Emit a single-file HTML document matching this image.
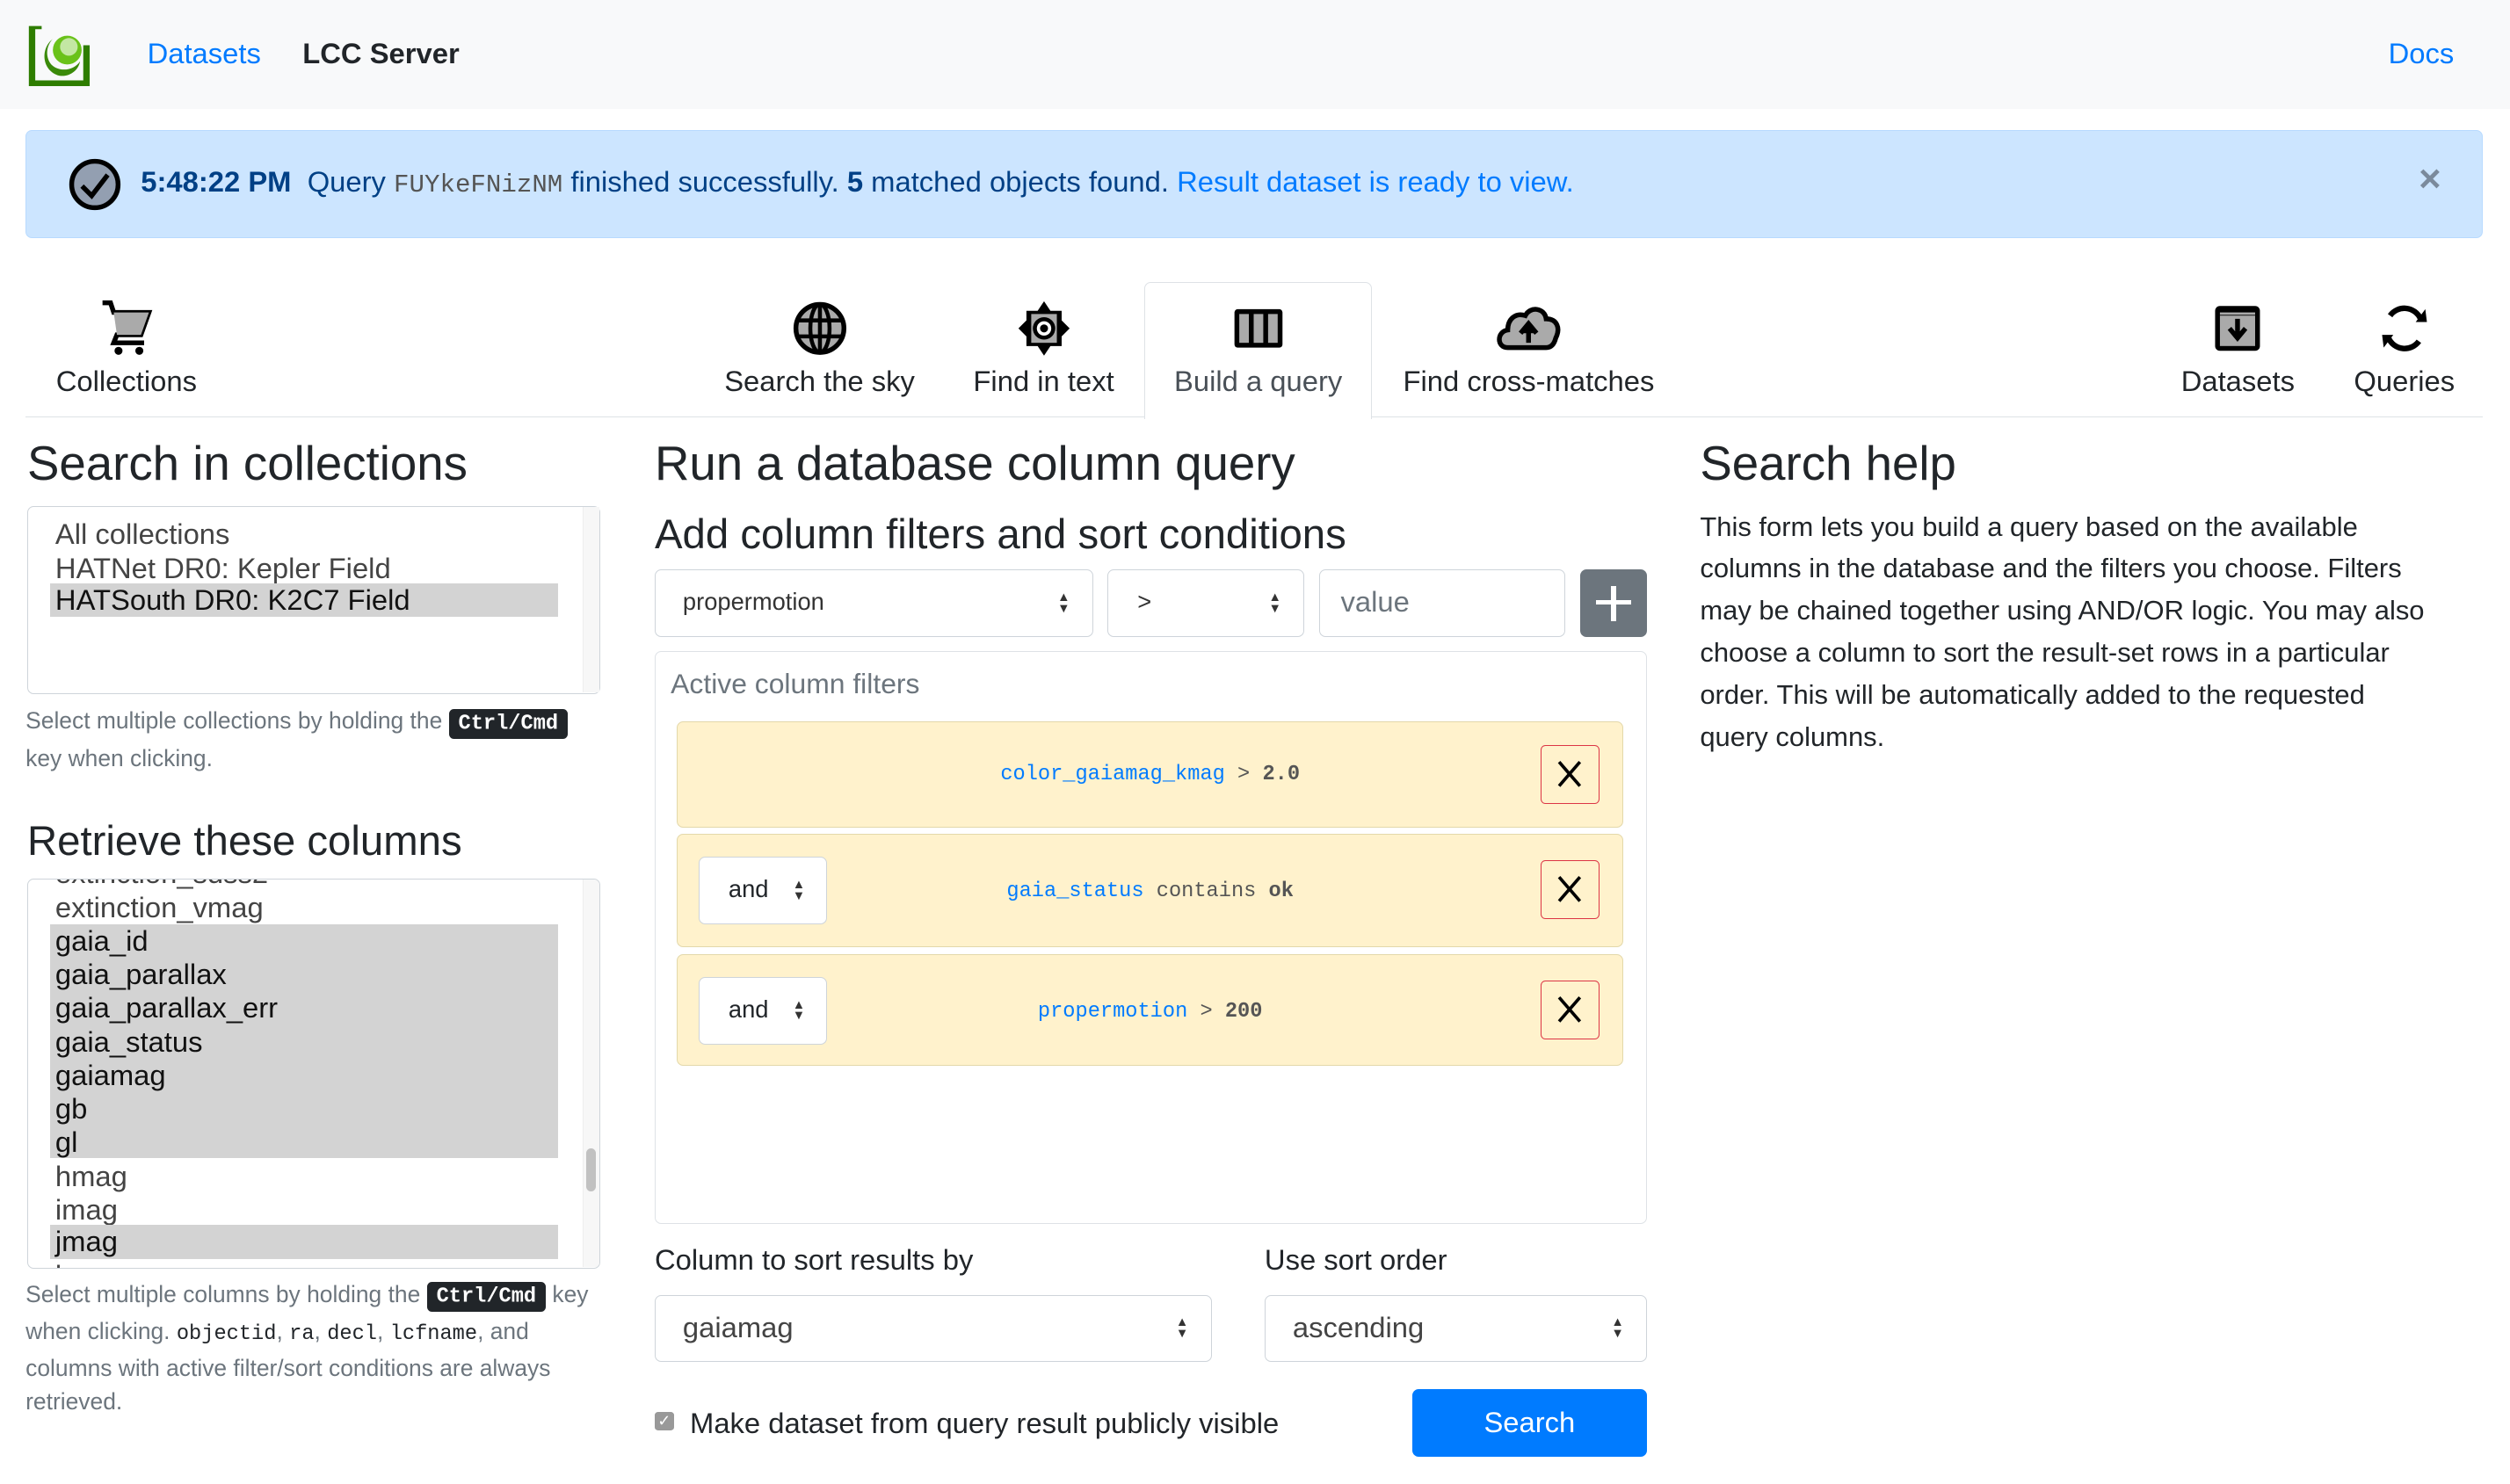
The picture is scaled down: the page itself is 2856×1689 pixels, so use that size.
<!DOCTYPE html>
<html><head><meta charset="utf-8">
<style>
html,body{margin:0;padding:0;background:#fff;width:2856px;height:1689px;overflow:hidden}
#w{zoom:1.82143;width:1568px;height:928px;position:relative;font-family:"Liberation Sans",Arial,sans-serif;color:#212529}
.a{position:absolute}
.mono{font-family:"Liberation Mono",monospace}
.blue{color:#007bff}
.tab{position:absolute;top:176px;height:85px;text-align:center;font-size:18px;color:#212529}
.tab svg{display:block;margin:11px auto 0}
.tab span{position:absolute;left:0;right:0;top:52px;white-space:nowrap}
h2{position:absolute;margin:0;font-weight:500;font-size:30px;line-height:36px;color:#212529}
.sel{position:absolute;border:1px solid #ced4da;border-radius:4px;background:#fff;box-sizing:border-box}
.opt{position:absolute;left:14px;right:26px;height:21px;font-size:18px;line-height:21px;padding-left:3px;color:#444}
.opt.s{background:#d3d3d3;color:#111}
.help{position:absolute;font-size:14.5px;line-height:21px;color:#6c757d}
kbd{background:#212529;color:#fff;border-radius:3px;padding:2px 6px;font-family:"Liberation Mono",monospace;font-size:13px;font-weight:bold}
code{font-family:"Liberation Mono",monospace;font-size:13px;color:#212529}
.arr{position:absolute;right:14px;top:50%;margin-top:-7px;font-size:8px;line-height:7px;color:#333}
.flt{position:absolute;left:423px;width:591px;background:#fff2cc;border:1px solid #e3d8aa;border-radius:4px;box-sizing:border-box}
.x{position:absolute;right:14px;width:37px;height:37px;border:1px solid #dc3545;border-radius:3px;box-sizing:border-box}
.and{position:absolute;left:13px;width:80px;height:42px;background:#fff;border:1px solid #ced4da;border-radius:4px;box-sizing:border-box;font-size:15px;line-height:40px;padding-left:18px}
.ft{position:absolute;left:0;right:0;text-align:center;font-family:"Liberation Mono",monospace;font-size:13px;color:#555}
</style></head><body><div id="w">
<div class="a" style="left:0;top:0;width:1568px;height:68px;background:#f8f9fa"></div>
<svg class="a" style="left:17px;top:14px" width="41" height="40" viewBox="0 0 41 40">
<path d="M3 2 H9 V4 H5 V36 H35 V14 H39 V40 H1 V2 Z" fill="#2e7d00"/>
<path d="M16 10 C8 16 9 30 20 33 C26 34 32 30 33 24 C29 30 20 31 15 26 C11 21 12 14 16 10 Z" fill="#3a8a0a"/>
<circle cx="25" cy="17" r="9" fill="#6ac21a"/><circle cx="26" cy="15" r="5.5" fill="#fff" opacity=".6"/>
</svg>
<div class="a blue" style="left:92px;top:23px;font-size:18px">Datasets</div>
<div class="a" style="left:189px;top:23px;font-size:18px;font-weight:bold">LCC Server</div>
<div class="a blue" style="left:1492px;top:23px;font-size:18px">Docs</div>
<div class="a" style="left:16px;top:81px;width:1535px;height:68px;box-sizing:border-box;background:#cce5ff;border:1px solid #b8daff;border-radius:4px"></div>
<svg class="a" style="left:42px;top:98px" width="34" height="34" viewBox="0 0 34 34"><circle cx="17" cy="17" r="14.5" fill="#939fb1" stroke="#000" stroke-width="3"/><path d="M9 18 L15 24 L25 11" fill="none" stroke="#000" stroke-width="3"/></svg>
<div class="a" style="left:88px;top:103px;font-size:18px;color:#004085;white-space:nowrap"><b>5:48:22 PM</b>&nbsp; Query <span class="mono" style="color:#555;font-size:16px">FUYkeFNizNM</span> finished successfully. <b>5</b> matched objects found. <span class="blue">Result dataset is ready to view.</span></div>
<div class="a" style="left:1511px;top:98px;font-size:24px;font-weight:bold;color:#7b8a9c">×</div>
<div class="a" style="left:16px;top:260px;width:1535px;height:1px;background:#dee2e6"></div>
<div class="a" style="left:715px;top:176px;width:142px;height:86px;box-sizing:border-box;border:1px solid #dee2e6;border-bottom:none;border-radius:4px 4px 0 0;background:#fff"></div>
<div class="tab" style="left:19px;width:120px"><svg width="34" height="36" viewBox="0 0 34 36"><path d="M2 2 H7 L9 8 H31 L26 22 H11 L9 27 H28" fill="none" stroke="#000" stroke-width="3"/><path d="M9 8 H31 L26 22 H11 Z" fill="#aaa"/><circle cx="12" cy="32" r="2.5"/><circle cx="25" cy="32" r="2.5"/></svg><span>Collections</span></div>
<div class="tab" style="left:440px;width:144px"><svg width="34" height="36" viewBox="0 0 34 36"><circle cx="17" cy="18" r="15" fill="#aaa" stroke="#000" stroke-width="3"/><ellipse cx="17" cy="18" rx="6" ry="15" fill="none" stroke="#000" stroke-width="2.5"/><path d="M17 3V33M2 13H32M2 23H32" stroke="#000" stroke-width="2.5"/></svg><span>Search the sky</span></div>
<div class="tab" style="left:600px;width:104px"><svg width="34" height="36" viewBox="0 0 34 36"><path d="M17 1 L21 7 L28 7 L28 13 L33 18 L28 23 L28 29 L21 29 L17 35 L13 29 L6 29 L6 23 L1 18 L6 13 L6 7 L13 7 Z" fill="#000"/><rect x="9" y="9" width="16" height="18" fill="#aaa"/><circle cx="17" cy="18" r="7" fill="#000"/><circle cx="17" cy="18" r="4.5" fill="#fff"/><circle cx="17" cy="18" r="2.5" fill="#000"/></svg><span>Find in text</span></div>
<div class="tab" style="left:716px;width:140px"><svg width="34" height="36" viewBox="0 0 34 36"><rect x="2" y="6" width="30" height="24" rx="2" fill="#000"/><rect x="5" y="9" width="6" height="18" fill="#aaa"/><rect x="14" y="9" width="6" height="18" fill="#aaa"/><rect x="23" y="9" width="6" height="18" fill="#aaa"/></svg><span style="color:#495057">Build a query</span></div>
<div class="tab" style="left:870px;width:170px"><svg width="42" height="36" viewBox="0 0 42 36"><path d="M8 30 C1 30 1 20 8 19 C8 12 13 8 19 10 C22 4 31 5 32 12 C39 12 41 18 38 24 C37 28 35 30 32 30 Z" fill="#aaa" stroke="#000" stroke-width="3"/><path d="M21 27 V18 M16 21 L21 15 L26 21" fill="#000" stroke="#000" stroke-width="3"/></svg><span>Find cross-matches</span></div>
<div class="tab" style="left:1350px;width:96px"><svg width="34" height="36" viewBox="0 0 34 36"><rect x="3" y="4" width="28" height="28" rx="3" fill="#000"/><rect x="6" y="10" width="22" height="19" fill="#aaa"/><rect x="6" y="8" width="22" height="1.5" fill="#aaa"/><path d="M17 12 V22 M12 18 L17 24 L22 18" fill="none" stroke="#000" stroke-width="3"/></svg><span>Datasets</span></div>
<div class="tab" style="left:1460px;width:84px"><svg width="34" height="36" viewBox="0 0 34 36"><path d="M27 12 A11 11 0 0 0 8 10" fill="none" stroke="#000" stroke-width="3.5"/><path d="M7 24 A11 11 0 0 0 26 26" fill="none" stroke="#000" stroke-width="3.5"/><path d="M24 14 L31 14 L30 6 Z M10 22 L3 22 L4 30 Z" fill="#000"/></svg><span>Queries</span></div>
<h2 style="left:17px;top:272px">Search in collections</h2>
<div class="sel" style="left:17px;top:316px;width:358px;height:118px">
<div class="a" style="right:0;top:0;width:10px;height:116px;background:#f7f7f7;border-left:1px solid #eee"></div>
<div class="opt" style="top:7px">All collections</div>
<div class="opt" style="top:28px">HATNet DR0: Kepler Field</div>
<div class="opt s" style="top:48px">HATSouth DR0: K2C7 Field</div>
</div>
<div class="help" style="left:16px;top:440px;width:360px">Select multiple collections by holding the <kbd>Ctrl/Cmd</kbd><br>key when clicking.</div>
<h2 style="left:17px;top:508px;font-size:26px">Retrieve these columns</h2>
<div class="sel" style="left:17px;top:549px;width:358px;height:244px;overflow:hidden">
<div class="a" style="right:0;top:0;width:10px;height:242px;background:#f7f7f7;border-left:1px solid #eee"></div>
<div class="a" style="right:2px;top:168px;width:6px;height:27px;background:#c1c1c1;border-radius:3px"></div>
<div class="opt" style="top:-14px">extinction_sdss2</div>
<div class="opt" style="top:7px">extinction_vmag</div>
<div class="a" style="left:14px;right:26px;top:28px;height:146px;background:#d3d3d3"></div>
<div class="opt" style="top:28px;color:#111">gaia_id</div>
<div class="opt" style="top:49px;color:#111">gaia_parallax</div>
<div class="opt" style="top:70px;color:#111">gaia_parallax_err</div>
<div class="opt" style="top:91px;color:#111">gaia_status</div>
<div class="opt" style="top:112px;color:#111">gaiamag</div>
<div class="opt" style="top:133px;color:#111">gb</div>
<div class="opt" style="top:154px;color:#111">gl</div>
<div class="opt" style="top:175px">hmag</div>
<div class="opt" style="top:196px">imag</div>
<div class="opt s" style="top:216px">jmag</div>
<div class="opt" style="top:237px">kmag</div>
</div>
<div class="help" style="left:16px;top:798px;width:362px">Select multiple columns by holding the <kbd>Ctrl/Cmd</kbd> key when clicking. <code>objectid</code>, <code>ra</code>, <code>decl</code>, <code>lcfname</code>, and columns with active filter/sort conditions are always retrieved.</div>
<h2 style="left:409px;top:272px">Run a database column query</h2>
<h2 style="left:409px;top:316px;font-size:26px">Add column filters and sort conditions</h2>
<div class="sel" style="left:409px;top:356px;width:274px;height:42px;font-size:15px;line-height:40px;padding-left:17px;color:#333">propermotion<div class="arr">▲<br>▼</div></div>
<div class="sel" style="left:692px;top:356px;width:123px;height:42px;font-size:15px;line-height:40px;padding-left:18px;color:#333">&gt;<div class="arr">▲<br>▼</div></div>
<div class="sel" style="left:824px;top:356px;width:154px;height:42px;font-size:18px;line-height:40px;padding-left:13px;color:#6c757d">value</div>
<div class="a" style="left:987px;top:356px;width:42px;height:42px;background:#6c757d;border-radius:4px"><div class="a" style="left:10px;top:19px;width:22px;height:3px;background:#fff"></div><div class="a" style="left:19.5px;top:10px;width:3px;height:22px;background:#fff"></div></div>
<div class="a" style="left:409px;top:407px;width:620px;height:358px;box-sizing:border-box;border:1px solid #dee2e6;border-radius:4px"></div>
<div class="a" style="left:419px;top:417px;font-size:17.5px;color:#6c757d">Active column filters</div>
<div class="flt" style="top:451px;height:66px">
<div class="ft" style="top:25px"><span class="blue">color_gaiamag_kmag</span> &gt; <b>2.0</b></div>
<div class="x" style="top:14px"><svg width="35" height="35" viewBox="0 0 35 35"><path d="M11 10 L24 25 M24 10 L11 25" stroke="#000" stroke-width="2"/></svg></div></div>
<div class="flt" style="top:521px;height:71px">
<div class="and" style="top:14px">and<div class="arr" style="right:13px">▲<br>▼</div></div>
<div class="ft" style="top:28px"><span class="blue">gaia_status</span> contains <b>ok</b></div>
<div class="x" style="top:16px"><svg width="35" height="35" viewBox="0 0 35 35"><path d="M11 10 L24 25 M24 10 L11 25" stroke="#000" stroke-width="2"/></svg></div></div>
<div class="flt" style="top:596px;height:70px">
<div class="and" style="top:14px">and<div class="arr" style="right:13px">▲<br>▼</div></div>
<div class="ft" style="top:28px"><span class="blue">propermotion</span> &gt; <b>200</b></div>
<div class="x" style="top:16px"><svg width="35" height="35" viewBox="0 0 35 35"><path d="M11 10 L24 25 M24 10 L11 25" stroke="#000" stroke-width="2"/></svg></div></div>
<div class="a" style="left:409px;top:777px;font-size:18px">Column to sort results by</div>
<div class="a" style="left:790px;top:777px;font-size:18px">Use sort order</div>
<div class="sel" style="left:409px;top:809px;width:348px;height:42px;font-size:18px;line-height:40px;padding-left:17px;color:#444">gaiamag<div class="arr">▲<br>▼</div></div>
<div class="sel" style="left:790px;top:809px;width:239px;height:42px;font-size:18px;line-height:40px;padding-left:17px;color:#444">ascending<div class="arr">▲<br>▼</div></div>
<div class="a" style="left:409px;top:882px;width:12px;height:12px;background:#999;border-radius:2px;color:#fff;font-size:10px;line-height:12px;text-align:center">✓</div>
<div class="a" style="left:431px;top:879px;font-size:18px">Make dataset from query result publicly visible</div>
<div class="a" style="left:882px;top:868px;width:147px;height:42px;background:#007bff;border-radius:4px;color:#fff;font-size:18px;line-height:42px;text-align:center">Search</div>
<h2 style="left:1062px;top:272px">Search help</h2>
<div class="a" style="left:1062px;top:316px;width:490px;font-size:17px;line-height:26.3px;white-space:nowrap">This form lets you build a query based on the available<br>columns in the database and the filters you choose. Filters<br>may be chained together using AND/OR logic. You may also<br>choose a column to sort the result-set rows in a particular<br>order. This will be automatically added to the requested<br>query columns.</div>
</div></body></html>
